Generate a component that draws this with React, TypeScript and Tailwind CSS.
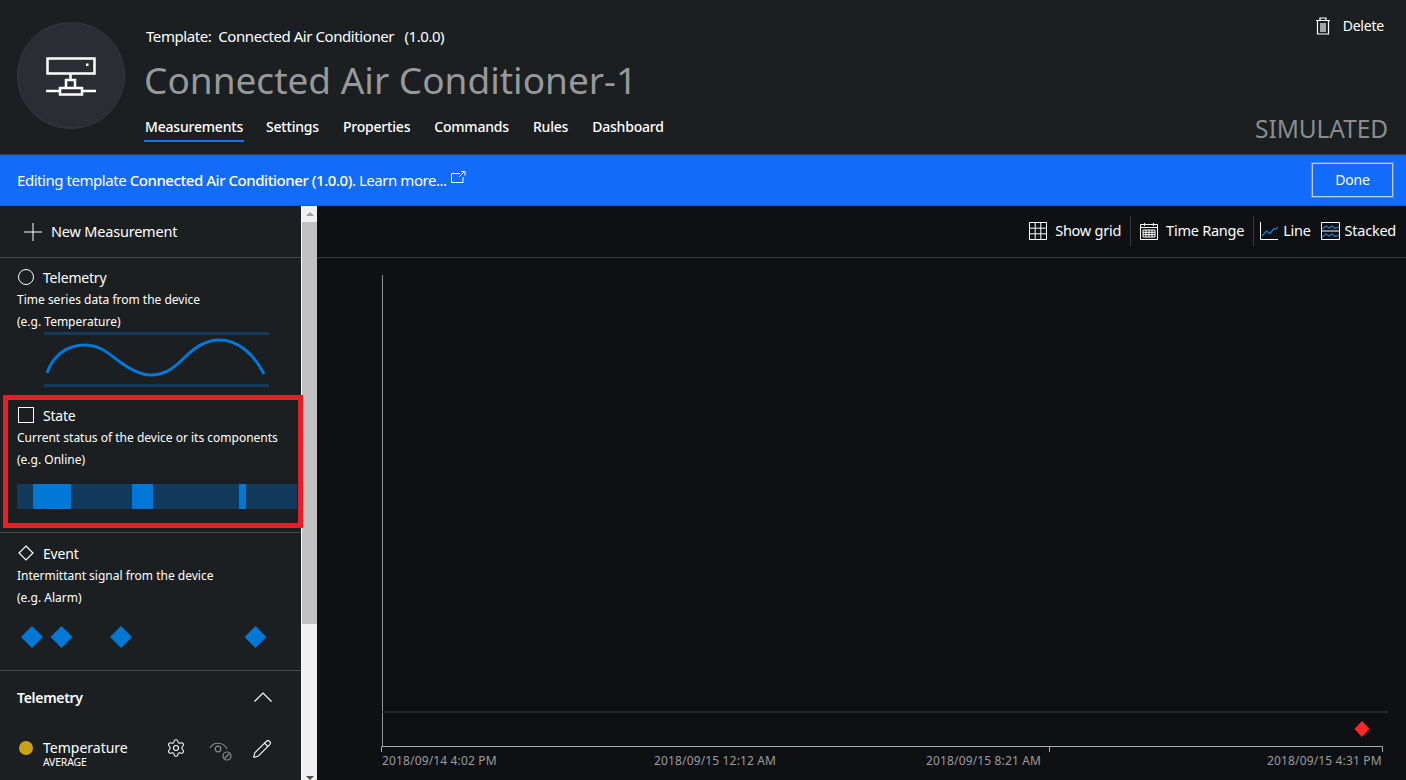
import { Settings, Pencil } from "lucide-react";

function DeviceIcon() {
  return (
    <svg width="50" height="40" viewBox="0 0 50 40" fill="none" stroke="white" strokeWidth="2.500">
      <rect x="1.500" y="2.500" width="47" height="15" />
      <rect x="40" y="7.500" width="2.500" height="2.500" fill="white" stroke="none" />
      <path d="M24.500 18v6M20 32v-8h9v8M14 32h22v6.500H14zM0 35h14M36 35h14" />
    </svg>
  );
}

function Wave() {
  return (
    <svg width="226" height="58" viewBox="44 331 226 58" fill="none" className="block ml-[27px] -mt-[2px]">
      <path d="M44 333.500H269M44 385.500H269" stroke="#123a5c" strokeWidth="3" />
      <path
        d="M47 373C53 355 68 345 84 345C100 345 108 353 120 362C132 371 141 375 151 375C163 375 172 370 183 359C194 348 205 340 219 340C238 340 254 354 264 374"
        stroke="#0078d7"
        strokeWidth="3"
      />
    </svg>
  );
}

function Diamonds() {
  return (
    <svg width="280" height="24" viewBox="17 625 280 24" className="block">
      {[32, 61.5, 121, 255.5].map((x) => (
        <polygon key={x} points={`${x - 11},637 ${x},626 ${x + 11},637 ${x},648`} fill="#0078d7" />
      ))}
    </svg>
  );
}

function HideIcon() {
  return (
    <svg width="24" height="22" viewBox="0 0 24 22" fill="none" stroke="#8a8d90" strokeWidth="1.200">
      <path d="M1 8C4 2 14 1 18 9" />
      <circle cx="9" cy="9" r="2.800" />
      <circle cx="18" cy="16" r="4" />
      <path d="M15.500 18.500l5-5" />
    </svg>
  );
}

function ChartAxes() {
  return (
    <svg width="1089" height="500" viewBox="317 258 1089 500" className="block" fill="none">
      <path d="M382.500 275V747" stroke="#8d8f91" />
      <path d="M382 712H1388" stroke="#2e3032" strokeWidth="1.500" />
      <path d="M381.500 752V746.500H1382.500V752M1049.500 746.500V752" stroke="#a8aaac" />
      <polygon points="1354.500,729 1362,721 1369.500,729 1362,737" fill="#ff2626" />
    </svg>
  );
}

export default function App() {
  return (
    <div
      className="relative w-[1406px] h-[780px] overflow-hidden flex flex-col bg-[#0e1013] text-white"
      style={{ fontFamily: '"Noto Sans", "Open Sans", sans-serif' }}
    >
      {/* header */}
      <div className="h-[155px] shrink-0 flex bg-[#1b1f21] border-b border-[#3a3c3e]">
        <div className="ml-[17px] mt-[22px] w-[108px] h-[107px] rounded-full bg-[#2a2d31] border border-[#37393c] flex items-center justify-center">
          <DeviceIcon />
        </div>
        <div className="ml-[20px] flex-1 flex flex-col">
          <div className="mt-[26px] ml-[1px] h-[20px] text-[15px] leading-[20px] tracking-[-0.43px] whitespace-pre">
            Template:  Connected Air Conditioner   (1.0.0)
          </div>
          <div className="mt-[11px] h-[46px] text-[37px] leading-[46px] text-[#97999b] -ml-[1px]">
            Connected Air Conditioner-1
          </div>
          <div className="mt-[12px] flex text-[14px] font-medium tracking-[-0.2px] gap-[24px]">
            <div className="h-[27px] w-[97px] leading-[24px] relative">
              Measurements
              <div className="absolute -left-[1px] -right-[2px] bottom-0 h-[2px] bg-[#1a6cf5]" />
            </div>
            <div className="leading-[24px]">Settings</div>
            <div className="leading-[24px]">Properties</div>
            <div className="leading-[24px]">Commands</div>
            <div className="leading-[24px]">Rules</div>
            <div className="leading-[24px]">Dashboard</div>
          </div>
        </div>
        <div className="w-[140px] pr-[22px] flex flex-col items-end">
          <div className="mt-[16px] flex items-center gap-[12px] text-[14px] leading-[20px] tracking-[-0.2px]">
            <svg width="16" height="18" viewBox="0 0 16 18" fill="none" stroke="white" strokeWidth="1.200">
              <path d="M1 3.500H15M5 3V1h6v2M2.500 4v13h11V4M6 6v9M8 6v9M10 6v9" />
            </svg>
            Delete
          </div>
          <div className="mt-[77px] -mr-[4px] text-[24.500px] leading-[32px] text-[#8a8c8e] tracking-[-0.1px]">SIMULATED</div>
        </div>
      </div>

      {/* blue bar */}
      <div className="h-[51px] shrink-0 flex items-center bg-[#126bfb] pl-[17px] pr-[13px] border-b border-[#0f5ad6]">
        <div className="text-[15px] leading-[20px] tracking-[-0.45px]">
          Editing template <span className="font-medium">Connected Air Conditioner (1.0.0)</span>. Learn more...
        </div>
        <svg width="15" height="13" viewBox="0 0 15 13" fill="none" stroke="white" className="ml-[4px] -mt-[5px]">
          <path d="M9 2.500H.5V11.500H12V6M8 6l5-5M10 .5h4v4" />
        </svg>
        <div className="ml-auto w-[81px] h-[34px] -mt-[1px] border border-[#c3c9d2] outline outline-[#c3c9d2]/30 flex items-center justify-center text-[14px] tracking-[-0.2px]">
          Done
        </div>
      </div>

      <div className="flex-1 flex min-h-0">
        {/* sidebar */}
        <div className="w-[301px] shrink-0 bg-[#1b1f21] flex flex-col overflow-hidden">
          <div className="h-[52px] shrink-0 flex items-center pl-[24px] gap-[9px] border-b border-[#454749] text-[14.500px] tracking-[-0.2px]">
            <svg width="18" height="18" viewBox="0 0 18 18" stroke="white" strokeWidth="1">
              <path d="M9 0V18M0 9H18" />
            </svg>
            New Measurement
          </div>

          <div className="h-[137px] shrink-0 pl-[17px] pt-[9px]">
            <div className="flex items-center h-[20px] gap-[9px] text-[14px] tracking-[-0.2px]">
              <div className="ml-[1px] w-[16px] h-[16px] rounded-full border-[1.500px] border-white" />
              Telemetry
            </div>
            <div className="mt-[2px] text-[12px] leading-[22px]">Time series data from the device</div>
            <div className="text-[12px] leading-[22px]">(e.g. Temperature)</div>
            <Wave />
          </div>

          <div className="h-[138px] shrink-0 pl-[17px] pt-[10px] border-b border-[#454749]">
            <div className="flex items-center h-[20px] gap-[9px] text-[14px] tracking-[-0.2px]">
              <div className="ml-[1px] w-[16px] h-[16px] border-[1.500px] border-white" />
              State
            </div>
            <div className="mt-[2px] text-[12px] leading-[22px]">Current status of the device or its components</div>
            <div className="text-[12px] leading-[22px]">(e.g. Online)</div>
            <div className="mt-[13px] w-[280px] h-[25px] flex bg-[#123a5c]">
              <div className="w-[16px]" />
              <div className="w-[38px] bg-[#0078d7]" />
              <div className="w-[61px]" />
              <div className="w-[21px] bg-[#0078d7]" />
              <div className="w-[86px]" />
              <div className="w-[7px] bg-[#0078d7]" />
            </div>
          </div>

          <div className="h-[138px] shrink-0 pl-[17px] pt-[10px] border-b border-[#454749]">
            <div className="flex items-center h-[20px] gap-[9px] text-[14px] tracking-[-0.2px]">
              <svg width="16" height="16" viewBox="0 0 16 16" fill="none" stroke="white" strokeWidth="1.200" className="ml-[1px]">
                <path d="M8 1l7 7-7 7-7-7z" />
              </svg>
              Event
            </div>
            <div className="mt-[2px] text-[12px] leading-[22px]">Intermittant signal from the device</div>
            <div className="text-[12px] leading-[22px]">(e.g. Alarm)</div>
            <div className="mt-[16px]">
              <Diamonds />
            </div>
          </div>

          <div className="pl-[17px] pr-[29px] pt-[14px] flex items-center justify-between h-[38px] text-[14px] font-semibold tracking-[-0.3px] shrink-0">
            Telemetry
            <svg width="18" height="10" viewBox="0 0 18 10" fill="none" stroke="white" strokeWidth="1.200">
              <path d="M.5 9.500L9 1l8.500 8.500" />
            </svg>
          </div>

          <div className="mt-[24px] flex items-start pl-[19px] shrink-0">
            <div className="mt-[8px] w-[14px] h-[14px] rounded-full bg-[#c8a415]" />
            <div className="ml-[10px] w-[123px]">
              <div className="text-[14px] leading-[18px] mt-[6px]">Temperature</div>
              <div className="text-[10.500px] leading-[10px] tracking-[-0.2px]">AVERAGE</div>
            </div>
            <Settings size={20} strokeWidth={1.300} className="mt-[5px]" />
            <div className="ml-[23px] mt-[7px]">
              <HideIcon />
            </div>
            <Pencil size={20} strokeWidth={1.300} className="ml-[19px] mt-[6px]" />
          </div>
        </div>

        {/* scrollbar */}
        <div className="w-[16px] shrink-0 flex flex-col items-center bg-[#f0f0f0] border-l border-white">
          <div className="h-[16px] flex items-center justify-center">
            <div className="w-0 h-0 border-x-[4px] border-x-transparent border-b-[4px] border-b-[#a3a3a3]" />
          </div>
          <div className="w-full h-[402px] bg-[#c1c1c1]" />
          <div className="mt-auto h-[5px] flex items-end justify-center">
            <div className="w-0 h-0 border-x-[4px] border-x-transparent border-t-[4px] border-t-[#505050]" />
          </div>
        </div>

        {/* chart */}
        <div className="flex-1 min-w-0 flex flex-col">
          <div className="h-[52px] shrink-0 flex items-center justify-end pr-[10px] pb-[2px] border-b border-[#38393b] text-[14.500px] tracking-[-0.25px]">
            <svg width="18" height="18" viewBox="0 0 18 18" fill="none" stroke="white" strokeWidth="1">
              <path d="M.5.500h17v17H.5zM6.200.500v17M11.800.500v17M.5 6.200h17M.5 11.800h17" />
            </svg>
            <span className="ml-[8px]">Show grid</span>
            <div className="ml-[9px] w-px h-[30px] bg-[#3a3b3d]" />
            <svg width="18" height="18" viewBox="0 0 18 18" fill="none" stroke="white" strokeWidth="1" className="ml-[9px]">
              <path d="M.5 2.500h17v15H.5zM.5 5.500h17M4.500 1v3M13.500 1v3M3 8h12v7H3zM3 10.300h12M3 12.600h12M6 8v7M9 8v7M12 8v7" />
            </svg>
            <span className="ml-[8px]">Time Range</span>
            <div className="ml-[9px] w-px h-[30px] bg-[#3a3b3d]" />
            <svg width="18" height="18" viewBox="0 0 18 18" fill="none" className="ml-[6px]">
              <path d="M.5 0v17.500H18" stroke="white" />
              <path d="M2 14l4.500-5 3.500 2.500 4-5 1.500 1 2.500-2.500" stroke="#1b7ad2" strokeWidth="1.300" />
            </svg>
            <span className="ml-[5px]">Line</span>
            <svg width="19" height="18" viewBox="0 0 19 18" fill="none" className="ml-[10px]">
              <path d="M.5.500h18v17H.5zM.5 9h18" stroke="white" />
              <path d="M1 7l4-3 3 2 3-2 3 2.500 4-1.500M1 15l4-3 3 2 3-2 3 2.500 4-1.500" stroke="#1b7ad2" strokeWidth="1.300" />
            </svg>
            <span className="ml-[5px]">Stacked</span>
          </div>
          <ChartAxes />
          <div className="-mt-[5px] pl-[65px] flex text-[12px] leading-[16px] tracking-[0.15px] text-[#9a9c9e] whitespace-nowrap">
            <span className="w-[272px]">2018/09/14 4:02 PM</span>
            <span className="w-[272px]">2018/09/15 12:12 AM</span>
            <span className="w-[341px]">2018/09/15 8:21 AM</span>
            <span>2018/09/15 4:31 PM</span>
          </div>
        </div>
      </div>

      {/* red highlight */}
      <div className="absolute left-[3px] top-[395px] w-[300px] h-[133px] border-[5px] border-[#ed1c24] pointer-events-none" />
    </div>
  );
}
